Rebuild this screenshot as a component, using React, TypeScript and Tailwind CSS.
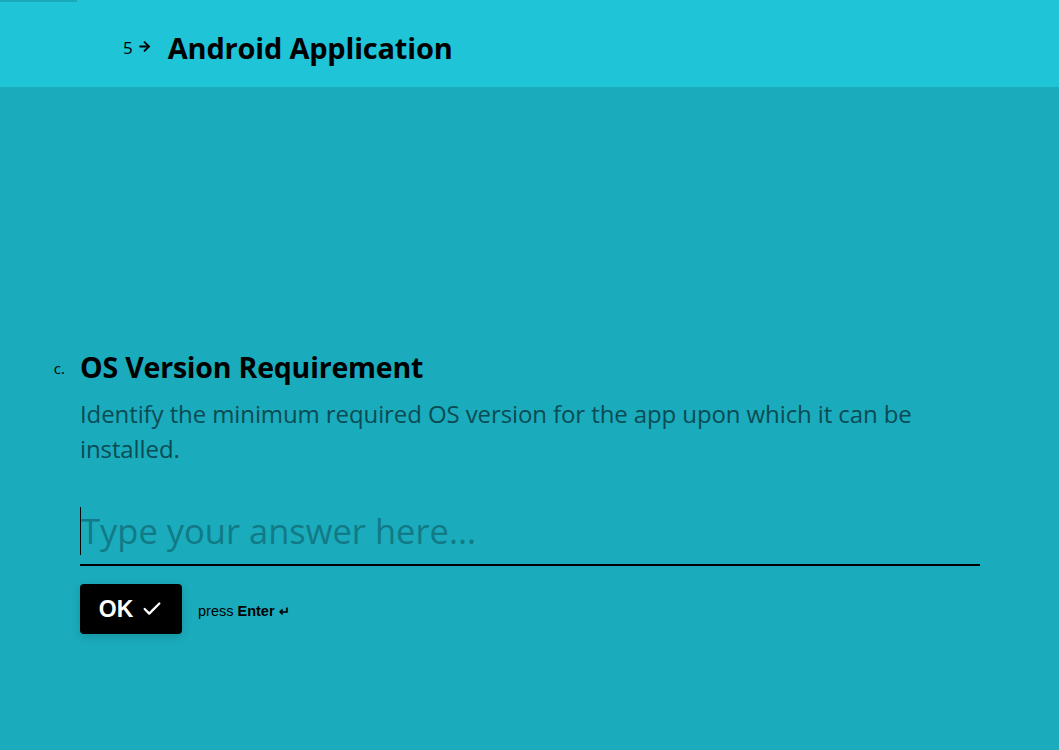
import { ArrowRight, Check } from 'lucide-react'

const font = { fontFamily: '"Open Sans", "Noto Sans", sans-serif' }
const arial = { fontFamily: '"Liberation Sans", Arial, sans-serif' }

export default function App() {
    return (
        <div className="w-[1059px] h-[750px] bg-[#1aacbc] flex flex-col overflow-hidden" style={font}>
            <header className="relative h-[87px] bg-[#1fc4d6] flex items-center shrink-0">
                <div className="absolute left-0 top-0 h-[2px] w-[77px] bg-[#1aa9b9]" />
                <div className="flex items-center pl-[123px] mt-[8px]">
                    <span className="text-[17px] text-black leading-none">5</span>
                    <ArrowRight size={15} strokeWidth={3} className="ml-[4px] -mt-[3px] text-black" />
                    <h1 className="ml-[16px] text-[29px] font-bold text-black leading-none tracking-[-0.2px]">
                        Android Application
                    </h1>
                </div>
            </header>
            <main className="flex-grow pt-[262px]">
                <div className="flex">
                    <span className="w-[80px] pr-[15px] text-right text-[15px] text-black pt-[8px]">c.</span>
                    <div className="w-[900px]">
                        <h2 className="text-[28.5px] font-bold text-black leading-[36px] tracking-[-0.2px]">
                            OS Version Requirement
                        </h2>
                        <p className="mt-[11px] text-[24px] leading-[35px] text-[#0b4b54] tracking-[-0.1px]">
                            Identify the minimum required OS version for the app upon which it can be installed.
                        </p>
                        <div className="mt-[24px] border-b-2 border-black flex items-center h-[76px] pt-[8px]">
                            <div className="w-px h-[48px] bg-black" />
                            <span className="text-[34.5px] text-[#127a86] leading-none">Type your answer here...</span>
                        </div>
                        <div className="mt-[18px] flex items-center">
                            <button className="h-[50px] w-[102px] bg-black rounded-[4px] shadow-[0_3px_10px_rgba(0,0,0,0.15)] flex items-center justify-center gap-[8px] text-white">
                                <span className="text-[23px] font-bold" style={arial}>OK</span>
                                <Check size={22} strokeWidth={2.5} />
                            </button>
                            <span className="ml-[16px] mt-[5px] text-[14.5px] text-black" style={arial}>
                                press <b>Enter</b> <span className="text-[13px] font-bold">↵</span>
                            </span>
                        </div>
                    </div>
                </div>
            </main>
        </div>
    )
}
